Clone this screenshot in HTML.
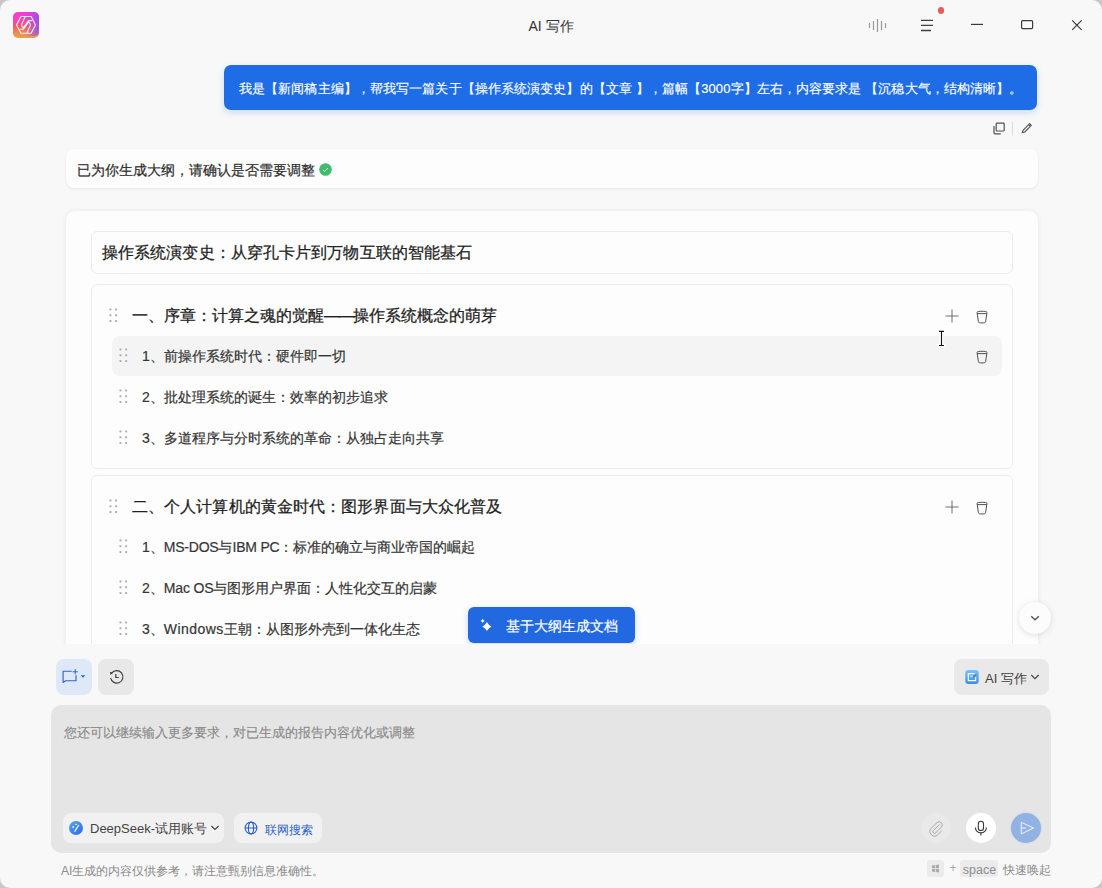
<!DOCTYPE html>
<html><head><meta charset="utf-8">
<style>
*{box-sizing:border-box;margin:0;padding:0}
html,body{width:1102px;height:888px;overflow:hidden;background:#c8c8c8;font-family:"Liberation Sans",sans-serif;color:#2b2b2b}
.win{position:absolute;left:0;top:0;width:1102px;height:888px;background:#f8f8f8;border-radius:10px;overflow:hidden}
.abs{position:absolute}
svg{position:absolute;overflow:visible}
.title{position:absolute;left:0;width:1102px;top:17px;text-align:center;font-size:14px;color:#333;line-height:18px}
.bubble{position:absolute;left:224px;top:65px;width:813px;height:45px;background:#1f6de6;border-radius:7px;color:#fff;font-size:13px;line-height:47px;padding-left:15px;letter-spacing:.1px;-webkit-text-stroke:.15px #fff;box-shadow:0 3px 7px rgba(31,109,230,.2);white-space:nowrap}
.card1{position:absolute;left:66px;top:149px;width:972px;height:39px;background:#fdfdfd;border-radius:8px;box-shadow:0 1px 3px rgba(0,0,0,.07);font-size:14px;line-height:42px;padding-left:11px;color:#2c2c2c;-webkit-text-stroke:.2px #2c2c2c}
.viewport{position:absolute;left:0;top:0;width:1102px;height:644px;overflow:hidden}
.outline{position:absolute;left:66px;top:211px;width:972px;height:520px;background:#fdfdfd;border-radius:9px;box-shadow:0 0 5px rgba(0,0,0,.08)}
.tin{position:absolute;left:25px;top:20px;width:922px;height:43px;border:1px solid #ececec;border-radius:6px;font-size:16px;line-height:41px;padding-left:10px;color:#222;-webkit-text-stroke:.25px #222;letter-spacing:.1px}
.sec{position:absolute;left:25px;width:922px;border:1px solid #ececec;border-radius:6px}
.h{position:absolute;left:40px;font-size:16px;color:#222;line-height:20px;-webkit-text-stroke:.25px #222;white-space:nowrap}
.it{position:absolute;left:50px;font-size:14px;color:#363636;line-height:18px;white-space:nowrap;-webkit-text-stroke:.2px #363636}
.hov{position:absolute;left:20px;width:890px;height:40px;background:#f4f4f4;border-radius:8px}
.input{position:absolute;left:51px;top:705px;width:1000px;height:148px;background:#e5e5e5;border-radius:10px}
.ph{position:absolute;left:13px;top:19px;font-size:13px;color:#8a8a8a;-webkit-text-stroke:.15px #8a8a8a;line-height:18px;white-space:nowrap}
.chip{position:absolute;top:108px;height:30px;background:#f1f1f1;border-radius:8px;font-size:14px;line-height:30px;white-space:nowrap}
.foot{position:absolute;left:61px;top:862.5px;font-size:12px;color:#8a8a8a;line-height:16px;white-space:nowrap}
.btn{position:absolute;border-radius:8px}
.circ{position:absolute;width:30px;height:30px;border-radius:50%}
</style></head><body>
<div class="win">
  <!-- app icon -->
  <svg style="left:13px;top:12px" width="26" height="26" viewBox="0 0 26 26">
    <defs>
      <linearGradient id="g1" x1="0" y1="0" x2="0" y2="1">
        <stop offset="0" stop-color="#f63ad8"/><stop offset=".38" stop-color="#f24aa8"/><stop offset=".55" stop-color="#f05e62"/><stop offset=".78" stop-color="#ea8a52"/><stop offset="1" stop-color="#e8a24c"/>
      </linearGradient>
      <linearGradient id="g2" x1="0" y1="0" x2="1" y2="0">
        <stop offset=".45" stop-color="#a050f0" stop-opacity="0"/><stop offset="1" stop-color="#9a4cf2" stop-opacity=".9"/>
      </linearGradient>
    </defs>
    <rect x="0" y="0" width="26" height="26" rx="5" fill="url(#g1)"/>
    <rect x="0" y="0" width="26" height="24" rx="5" fill="url(#g2)"/>
    <path d="M3.5 12.9 L7.9 4.5 H18.1 L22.5 12.9 L18.1 21.3 H7.9 Z" fill="none" stroke="#f4ecfa" stroke-width="1.1" stroke-linejoin="round"/>
    <path d="M12.3 4.6L8.7 12.3Q8.3 13.2 9 14.2L10.2 15.8L15.6 8.6H19.2 M13.7 21.2L17.3 13.5Q17.7 12.6 17 11.6L15.8 10L10.4 17.2H6.8" fill="none" stroke="#f4ecfa" stroke-width="1.1" stroke-linejoin="round"/>
  </svg>
  <div class="title">AI 写作</div>
  <!-- waveform -->
  <svg style="left:866px;top:16px" width="24" height="18" viewBox="0 0 24 18">
    <g stroke="#9a9a9a" stroke-width="1.2">
      <path d="M3.5 7V12M7.5 5V14M11.5 3V16M15.5 5V14M19.5 7V12"/>
    </g>
  </svg>
  <!-- menu -->
  <svg style="left:918px;top:16px" width="20" height="18" viewBox="0 0 20 18">
    <path d="M3 4.4H15M3 9.4H15M3 14.5H13" stroke="#3f3f3f" stroke-width="1.3"/>
  </svg>
  <div class="abs" style="left:937.6px;top:7.4px;width:6.8px;height:6.8px;border-radius:50%;background:#ea5a5a"></div>
  <!-- min max close -->
  <svg style="left:968px;top:14px" width="120" height="20" viewBox="0 0 120 20">
    <path d="M3 10.4H15" stroke="#3a3a3a" stroke-width="1.2"/>
    <rect x="53.6" y="6.6" width="11" height="8" rx="1" fill="none" stroke="#3a3a3a" stroke-width="1.2"/>
    <path d="M104.2 6.4L113.6 15.8M113.6 6.4L104.2 15.8" stroke="#3a3a3a" stroke-width="1.2"/>
  </svg>

  <div class="viewport">
  <div class="bubble">我是【新闻稿主编】，帮我写一篇关于【操作系统演变史】的【文章 】，篇幅【3000字】左右，内容要求是 【沉稳大气，结构清晰】。</div>
  <!-- copy / edit -->
  <svg style="left:990px;top:118px" width="46" height="20" viewBox="0 0 46 20">
    <rect x="6.2" y="5.2" width="8" height="7.8" rx=".8" fill="none" stroke="#505050" stroke-width="1.2"/>
    <path d="M4 8V14.8A1 1 0 0 0 5 15.8H10.8" fill="none" stroke="#505050" stroke-width="1.2"/>
    <path d="M22.5 3.5V17.5" stroke="#dcdcdc" stroke-width="1"/>
    <path d="M32.2 14.8L33 12.3L39.6 5.7L41.3 7.4L34.7 14L32.2 14.8Z M38.6 6.7L40.3 8.4" fill="none" stroke="#505050" stroke-width="1.1" stroke-linejoin="round"/>
  </svg>

  <div class="card1">已为你生成大纲，请确认是否需要调整
    <svg style="left:253px;top:14.3px" width="13" height="13" viewBox="0 0 13 13">
      <circle cx="6.5" cy="6.5" r="6.3" fill="#42bb6e"/>
      <path d="M4 6.9L5.7 8.4L9 5.1" fill="none" stroke="#d8f2e0" stroke-width="1"/>
    </svg>
  </div>

  <div class="outline">
    <div class="tin">操作系统演变史：从穿孔卡片到万物互联的智能基石</div>
    <div class="sec" style="top:73px;height:185px">
      <svg style="left:17px;top:23px" width="10" height="16" viewBox="0 0 10 16"><g fill="#ababab"><rect x="0.5" y="0.5" width="1.9" height="1.9"/><rect x="6.2" y="0.5" width="1.9" height="1.9"/><rect x="0.5" y="6.3" width="1.9" height="1.9"/><rect x="6.2" y="6.3" width="1.9" height="1.9"/><rect x="0.5" y="12.1" width="1.9" height="1.9"/><rect x="6.2" y="12.1" width="1.9" height="1.9"/></g></svg>
      <div class="h" style="top:21px">一、序章：计算之魂的觉醒<span style="letter-spacing:-1.5px">——</span>操作系统概念的萌芽</div>
      <svg style="left:853px;top:24px" width="14" height="14" viewBox="0 0 14 14"><path d="M0.5 7H13.5M7 0.5V13.5" stroke="#6e6e6e" stroke-width="1"/></svg>
      <svg style="left:884px;top:24.8px" width="12" height="14" viewBox="0 0 12 14" class="trash"><path d="M1 2.2C1 1 11 1 11 2.2 L9.6 11.6C9.4 12.7 8.6 12.9 6 12.9 3.4 12.9 2.6 12.7 2.4 11.6Z M1.2 3.6H10.8" fill="none" stroke="#505050" stroke-width="1"/></svg>
      <div class="hov" style="top:51px">
        <svg style="left:864px;top:13.8px" width="12" height="14" viewBox="0 0 12 14"><path d="M1 2.2C1 1 11 1 11 2.2 L9.6 11.6C9.4 12.7 8.6 12.9 6 12.9 3.4 12.9 2.6 12.7 2.4 11.6Z M1.2 3.6H10.8" fill="none" stroke="#505050" stroke-width="1"/></svg>
      </div>
      <svg style="left:27px;top:63px" width="10" height="16" viewBox="0 0 10 16"><g fill="#ababab"><rect x="0.5" y="0.5" width="1.9" height="1.9"/><rect x="6.2" y="0.5" width="1.9" height="1.9"/><rect x="0.5" y="6.3" width="1.9" height="1.9"/><rect x="6.2" y="6.3" width="1.9" height="1.9"/><rect x="0.5" y="12.1" width="1.9" height="1.9"/><rect x="6.2" y="12.1" width="1.9" height="1.9"/></g></svg>
      <div class="it" style="top:62px">1、前操作系统时代：硬件即一切</div>
      <svg style="left:27px;top:104px" width="10" height="16" viewBox="0 0 10 16"><g fill="#ababab"><rect x="0.5" y="0.5" width="1.9" height="1.9"/><rect x="6.2" y="0.5" width="1.9" height="1.9"/><rect x="0.5" y="6.3" width="1.9" height="1.9"/><rect x="6.2" y="6.3" width="1.9" height="1.9"/><rect x="0.5" y="12.1" width="1.9" height="1.9"/><rect x="6.2" y="12.1" width="1.9" height="1.9"/></g></svg>
      <div class="it" style="top:103px">2、批处理系统的诞生：效率的初步追求</div>
      <svg style="left:27px;top:145px" width="10" height="16" viewBox="0 0 10 16"><g fill="#ababab"><rect x="0.5" y="0.5" width="1.9" height="1.9"/><rect x="6.2" y="0.5" width="1.9" height="1.9"/><rect x="0.5" y="6.3" width="1.9" height="1.9"/><rect x="6.2" y="6.3" width="1.9" height="1.9"/><rect x="0.5" y="12.1" width="1.9" height="1.9"/><rect x="6.2" y="12.1" width="1.9" height="1.9"/></g></svg>
      <div class="it" style="top:144px">3、多道程序与分时系统的革命：从独占走向共享</div>
    </div>
    <div class="sec" style="top:264px;height:260px">
      <svg style="left:17px;top:23px" width="10" height="16" viewBox="0 0 10 16"><g fill="#ababab"><rect x="0.5" y="0.5" width="1.9" height="1.9"/><rect x="6.2" y="0.5" width="1.9" height="1.9"/><rect x="0.5" y="6.3" width="1.9" height="1.9"/><rect x="6.2" y="6.3" width="1.9" height="1.9"/><rect x="0.5" y="12.1" width="1.9" height="1.9"/><rect x="6.2" y="12.1" width="1.9" height="1.9"/></g></svg>
      <div class="h" style="top:21px;letter-spacing:.1px">二、个人计算机的黄金时代：图形界面与大众化普及</div>
      <svg style="left:853px;top:24px" width="14" height="14" viewBox="0 0 14 14"><path d="M0.5 7H13.5M7 0.5V13.5" stroke="#6e6e6e" stroke-width="1"/></svg>
      <svg style="left:884px;top:24.8px" width="12" height="14" viewBox="0 0 12 14"><path d="M1 2.2C1 1 11 1 11 2.2 L9.6 11.6C9.4 12.7 8.6 12.9 6 12.9 3.4 12.9 2.6 12.7 2.4 11.6Z M1.2 3.6H10.8" fill="none" stroke="#505050" stroke-width="1"/></svg>
      <svg style="left:27px;top:63px" width="10" height="16" viewBox="0 0 10 16"><g fill="#ababab"><rect x="0.5" y="0.5" width="1.9" height="1.9"/><rect x="6.2" y="0.5" width="1.9" height="1.9"/><rect x="0.5" y="6.3" width="1.9" height="1.9"/><rect x="6.2" y="6.3" width="1.9" height="1.9"/><rect x="0.5" y="12.1" width="1.9" height="1.9"/><rect x="6.2" y="12.1" width="1.9" height="1.9"/></g></svg>
      <div class="it" style="top:62px">1、<span style="letter-spacing:-.22px">MS-DOS</span>与<span style="letter-spacing:-.22px">IBM PC</span>：标准的确立与商业帝国的崛起</div>
      <svg style="left:27px;top:104px" width="10" height="16" viewBox="0 0 10 16"><g fill="#ababab"><rect x="0.5" y="0.5" width="1.9" height="1.9"/><rect x="6.2" y="0.5" width="1.9" height="1.9"/><rect x="0.5" y="6.3" width="1.9" height="1.9"/><rect x="6.2" y="6.3" width="1.9" height="1.9"/><rect x="0.5" y="12.1" width="1.9" height="1.9"/><rect x="6.2" y="12.1" width="1.9" height="1.9"/></g></svg>
      <div class="it" style="top:103px">2、<span style="letter-spacing:-.15px">Mac OS</span>与图形用户界面：人性化交互的启蒙</div>
      <svg style="left:27px;top:145px" width="10" height="16" viewBox="0 0 10 16"><g fill="#ababab"><rect x="0.5" y="0.5" width="1.9" height="1.9"/><rect x="6.2" y="0.5" width="1.9" height="1.9"/><rect x="0.5" y="6.3" width="1.9" height="1.9"/><rect x="6.2" y="6.3" width="1.9" height="1.9"/><rect x="0.5" y="12.1" width="1.9" height="1.9"/><rect x="6.2" y="12.1" width="1.9" height="1.9"/></g></svg>
      <div class="it" style="top:144px">3、<span style="letter-spacing:.45px">Windows</span>王朝：从图形外壳到一体化生态</div>
    </div>
  </div>
  <!-- I-beam cursor -->
  <svg style="left:936px;top:329px" width="10" height="20" viewBox="0 0 10 20">
    <path d="M2.6 2.4H8.4M5.5 2.4V16.5M2.6 16.5H8.4" stroke="#fff" stroke-width="3.4" stroke-linecap="round"/>
    <path d="M3 2.4H8M5.5 2.4V16.5M3 16.5H8" stroke="#111" stroke-width="1.1"/>
  </svg>
  <!-- floating button -->
  <div class="btn" style="left:468px;top:607px;width:167px;height:36px;background:#2168e1;border-radius:6px;box-shadow:0 2px 6px rgba(33,104,225,.25)">
    <svg style="left:11px;top:11px" width="14" height="14" viewBox="0 0 14 14">
      <path d="M7.9 3.9Q9.5 6.9 12.5 8.5Q9.5 10.1 7.9 13.1Q6.3 10.1 3.3 8.5Q6.3 6.9 7.9 3.9Z" fill="#fff"/>
      <path d="M3.7 0.8Q4.3 2.3 5.8 2.9Q4.3 3.5 3.7 5Q3.1 3.5 1.6 2.9Q3.1 2.3 3.7 0.8Z" fill="#fff"/>
    </svg>
    <div class="abs" style="left:38px;top:10px;font-size:14px;line-height:18px;color:#fff;-webkit-text-stroke:.2px #fff;white-space:nowrap">基于大纲生成文档</div>
  </div>
  <!-- scroll down -->
  <div class="abs" style="left:1019px;top:602px;width:32px;height:32px;border-radius:50%;background:#fcfcfc;box-shadow:0 1px 6px rgba(0,0,0,.12)">
    <svg style="left:11px;top:12px" width="10" height="8" viewBox="0 0 10 8"><path d="M1.2 2.2L5 5.8L8.8 2.2" fill="none" stroke="#555" stroke-width="1.4"/></svg>
  </div>
  </div>

  <!-- bottom toolbar -->
  <div class="btn" style="left:56px;top:659px;width:36px;height:36px;background:#dfe8f7">
    <svg style="left:0;top:0" width="36" height="36" viewBox="0 0 36 36">
      <path d="M15.8 12.2H7.1V23.4L9.7 21.7H20V16.3" fill="none" stroke="#2e66c9" stroke-width="1.15" stroke-linejoin="round"/>
      <path d="M19.2 10.2V15.4M16.6 12.8H21.8" stroke="#2e66c9" stroke-width="1"/>
      <path d="M24.7 16.2H29.3L27 18.8Z" fill="#2a63c8"/>
    </svg>
  </div>
  <div class="btn" style="left:98px;top:659px;width:36px;height:36px;background:#e8e8e8">
    <svg style="left:0;top:0" width="36" height="36" viewBox="0 0 36 36">
      <path d="M13.7 14.2A6.2 6.2 0 1 1 12.6 19" fill="none" stroke="#3c3c3c" stroke-width="1.15"/>
      <path d="M11.9 12.9L15.2 13.4L12.5 15.9Z" fill="#3c3c3c"/>
      <path d="M17.8 15V18.5H20.8" fill="none" stroke="#3c3c3c" stroke-width="1.15"/>
    </svg>
  </div>
  <div class="btn" style="left:954px;top:659px;width:95px;height:36px;background:#e9e9e9">
    <svg style="left:11px;top:11px" width="14" height="14" viewBox="0 0 14 14">
      <defs><linearGradient id="g3" x1="0" y1="0" x2="0" y2="1"><stop offset="0" stop-color="#7cc0f4"/><stop offset="1" stop-color="#3c8de6"/></linearGradient></defs>
      <rect x="0.3" y="0" width="13.4" height="14" rx="3" fill="url(#g3)"/>
      <path d="M9.6 3.6H3.3V10.7H10.6V7.2" fill="none" stroke="#f2fbff" stroke-width="1.2"/>
      <path d="M5.2 6.4H7.6" stroke="#bfe6ff" stroke-width="1.6"/>
      <path d="M8.2 7.4L10.8 4.6" stroke="#4a5a70" stroke-width="1"/>
    </svg>
    <div class="abs" style="left:31px;top:11px;font-size:13px;line-height:17px;color:#404040;white-space:nowrap">AI 写作</div>
    <svg style="left:76px;top:14px" width="10" height="8" viewBox="0 0 10 8"><path d="M1.3 2L5 5.6L8.7 2" fill="none" stroke="#444" stroke-width="1.2"/></svg>
  </div>

  <div class="input">
    <div class="ph">您还可以继续输入更多要求，对已生成的报告内容优化或调整</div>
    <div class="chip" style="left:12px;width:161px;color:#444">
      <svg style="left:6px;top:8px" width="14" height="14" viewBox="0 0 14 14">
        <defs><linearGradient id="g4" x1="0" y1="0" x2="1" y2="1"><stop offset="0" stop-color="#5aa2f2"/><stop offset="1" stop-color="#2a6ee0"/></linearGradient></defs>
        <circle cx="7" cy="7" r="7" fill="url(#g4)"/>
        <path d="M5.8 10.4L9.6 4.3M6.6 3.3H7.6" stroke="#fff" stroke-width="1.1" stroke-linecap="round"/>
        <path d="M4.2 4.7L5.3 6L4.2 7.3L3.1 6Z" fill="#fff"/>
      </svg>
      <div class="abs" style="left:27px;top:1px;font-size:13px">DeepSeek-试用账号</div>
      <svg style="left:147px;top:11px" width="10" height="8" viewBox="0 0 10 8"><path d="M1.4 2L5 5.4L8.6 2" fill="none" stroke="#444" stroke-width="1.2"/></svg>
    </div>
    <div class="chip" style="left:183px;width:88px;color:#2a62c9">
      <svg style="left:10px;top:8px" width="14" height="14" viewBox="0 0 14 14">
        <g fill="none" stroke="#2a62c9" stroke-width="1.1"><circle cx="7" cy="7" r="5.9"/><ellipse cx="7" cy="7" rx="2.6" ry="5.9"/><path d="M1.1 7H12.9"/></g>
      </svg>
      <div class="abs" style="left:31px;top:1.5px;font-size:12px">联网搜索</div>
    </div>
    <div class="circ" style="left:870px;top:108px;background:#e9e9e9">
      <svg style="left:0;top:0" width="30" height="30" viewBox="0 0 30 30">
        <path d="M18.6 11.3L12.4 17.5A1.6 1.6 0 0 0 14.7 19.8L20.5 14A3.2 3.2 0 0 0 16 9.5L10.2 15.3A4.6 4.6 0 0 0 16.7 21.8L20.8 17.7" fill="none" stroke="#a8a8a8" stroke-width="1"/>
      </svg>
    </div>
    <div class="circ" style="left:915px;top:108px;background:#fff">
      <svg style="left:0;top:0" width="30" height="30" viewBox="0 0 30 30">
        <rect x="12.3" y="8.3" width="5.2" height="9.2" rx="2.6" fill="none" stroke="#383838" stroke-width="1.1"/>
        <path d="M9.4 14.4A5.5 5.5 0 0 0 20.4 14.4M14.9 19.9V22.4" fill="none" stroke="#383838" stroke-width="1.1"/>
      </svg>
    </div>
    <div class="circ" style="left:960px;top:108px;background:#93b2e4;box-shadow:0 0 2px rgba(120,160,230,.35)">
      <svg style="left:0;top:0" width="30" height="30" viewBox="0 0 30 30">
        <path d="M10.3 9.3L22.6 15L10.3 20.9Z M10.3 15H15" fill="none" stroke="#eef3fc" stroke-width="1" stroke-linejoin="round"/>
      </svg>
    </div>
  </div>
  <div class="foot">AI生成的内容仅供参考，请注意甄别信息准确性。</div>
  <!-- shortcut -->
  <div class="abs" style="left:927px;top:860px;width:17px;height:17px;background:#ebebeb;border-radius:3px">
    <svg style="left:0;top:0" width="17" height="17" viewBox="0 0 17 17"><g fill="#ababab"><path d="M5 5.6L8 5.1V8.2H5Z M8.7 5L12 4.5V8.2H8.7Z M5 8.9H8V12L5 11.5Z M8.7 8.9H12V12.6L8.7 12.1Z"/></g></svg>
  </div>
  <div class="abs" style="left:949.5px;top:860px;font-size:12px;line-height:17px;color:#a8a8a8">+</div>
  <div class="abs" style="left:960px;top:860px;width:38px;height:17px;background:#ebebeb;border-radius:3px;font-size:12.5px;line-height:20px;color:#8e8e8e;text-align:center;padding-left:1px">space</div>
  <div class="abs" style="left:1003px;top:862px;font-size:12px;line-height:17px;color:#8a8a8a;white-space:nowrap">快速唤起</div>
</div>
</body></html>
